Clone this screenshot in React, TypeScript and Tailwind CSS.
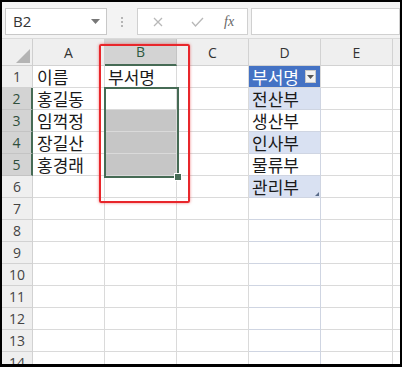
import React from 'react';

const grid = 'grid grid-cols-[31px_72px_72px_72px_72px_72px_7px]';
const cols = ['A', 'B', 'C', 'D', 'E'];

interface RowData {
  a?: string;
  b?: string;
  d?: string;
}

const rows: RowData[] = [
  { a: '이름', b: '부서명', d: '부서명' },
  { a: '홍길동', d: '전산부' },
  { a: '임꺽정', d: '생산부' },
  { a: '장길산', d: '인사부' },
  { a: '홍경래', d: '물류부' },
  { d: '관리부' },
  {}, {}, {}, {}, {}, {}, {}, {},
];

const korean = "font-['Noto_Sans_CJK_KR','Noto_Sans',sans-serif] text-[17px] text-[#1a1a1a] leading-none";

const Toolbar: React.FC = () => (
  <div className="h-[37px] bg-[#f3f3f3] flex items-start pt-[6px] border-b border-[#dadada]">
    <div className="ml-[3px] w-[102px] h-[27px] bg-white border border-[#c8c8c8] flex items-center justify-between pl-[7px] pr-[6px]">
      <span className="text-[15px] text-[#333] font-['Open_Sans',sans-serif]">B2</span>
      <svg width="9" height="5" viewBox="0 0 9 5">
        <path d="M0 0h9L4.5 5z" fill="#777" />
      </svg>
    </div>
    <div className="w-[30px] h-[27px] flex flex-col items-center justify-center gap-[2px]">
      <span className="w-[2px] h-[2px] bg-[#b5b5b5]" />
      <span className="w-[2px] h-[2px] bg-[#b5b5b5]" />
      <span className="w-[2px] h-[2px] bg-[#b5b5b5]" />
    </div>
    <div className="w-[111px] h-[27px] bg-white border border-[#d0d0d0] flex items-center">
      <svg className="ml-[15px]" width="10" height="10" viewBox="0 0 10 10">
        <path d="M1 1l8 8M9 1l-8 8" stroke="#b8b8b8" strokeWidth="1.3" />
      </svg>
      <svg className="ml-[28px]" width="13" height="10" viewBox="0 0 13 10">
        <path d="M1 5l3.5 4L12 1" stroke="#b8b8b8" strokeWidth="1.3" fill="none" />
      </svg>
      <span className="ml-[20px] font-['Liberation_Serif',serif] italic text-[14px] text-[#666]">fx</span>
    </div>
    <div className="ml-[3px] flex-1 h-[27px] bg-white border border-[#d0d0d0]" />
  </div>
);

const App: React.FC = () => {
  return (
    <div className="w-[402px] h-[367px] overflow-hidden border-2 border-b-[3px] border-black bg-white relative font-['Open_Sans',sans-serif]">
      <Toolbar />
      <div className="relative">
        {/* column headers */}
        <div className={`${grid} h-[27px] bg-[#efefef]`}>
          <div className="relative border-r border-b border-[#cfcfcf]">
            <svg className="absolute right-[2px] bottom-[2px]" width="14" height="14" viewBox="0 0 14 14">
              <path d="M14 0V14H0z" fill="#b4b4b4" />
            </svg>
          </div>
          {cols.map((c) =>
            c === 'B' ? (
              <div key={c} className="bg-[#d3d3d3] border-r border-[#c4c4c4] border-b-2 border-b-[#466b55] flex items-center justify-center text-[14px] text-[#2f5a41]">
                {c}
              </div>
            ) : (
              <div key={c} className="border-r border-b border-[#d2d2d2] flex items-center justify-center text-[14px] text-[#333]">
                {c}
              </div>
            )
          )}
          <div className="border-b border-[#d2d2d2]" />
        </div>

        {rows.map((r, i) => {
          const n = i + 1;
          const sel = n >= 2 && n <= 5;
          const band = n >= 2 && n <= 6 && n % 2 === 0;
          return (
            <div key={n} className={`${grid} h-[22px]`}>
              <div
                className={
                  sel
                    ? 'bg-[#d3d3d3] border-b border-[#c4c4c4] border-r-2 border-r-[#466b55] flex items-center justify-center text-[14px] text-[#2f4f3c]'
                    : 'bg-[#efefef] border-b border-r border-[#d2d2d2] flex items-center justify-center text-[14px] text-[#444]'
                }
              >
                {n}
              </div>
              <div className={`border-r border-b border-[#dadada] flex items-center pl-[4px] ${korean}`}>{r.a}</div>
              <div
                className={`border-r border-b border-[#dadada] flex items-center pl-[3px] ${korean} ${
                  n >= 3 && n <= 5 ? 'bg-[#c6c6c6]' : ''
                }`}
              >
                {r.b}
              </div>
              <div className="border-r border-b border-[#dadada]" />
              {n === 1 ? (
                <div className="relative bg-[#4472c4] border-r border-b border-[#dadada] flex items-center pl-[3px] font-['Noto_Sans_CJK_KR','Noto_Sans',sans-serif] text-[17px] text-white leading-none">
                  {r.d}
                  <div className="absolute right-[4px] top-[4px] w-[11px] h-[13px] bg-[#f2f2f2] border border-[#c8c8c8] flex items-center justify-center">
                    <svg width="7" height="4" viewBox="0 0 7 4">
                      <path d="M0 0h7L3.5 4z" fill="#555" />
                    </svg>
                  </div>
                </div>
              ) : (
                <div
                  className={`relative border-r border-b border-[#cfd5e2] flex items-center pl-[3px] ${korean} ${
                    band ? 'bg-[#d9e1f2]' : ''
                  }`}
                >
                  {r.d}
                  {n === 6 && (
                    <svg className="absolute right-[1px] bottom-[1px]" width="4" height="4" viewBox="0 0 4 4">
                      <path d="M4 0V4H0z" fill="#5a6c8a" />
                    </svg>
                  )}
                </div>
              )}
              <div className="border-r border-b border-[#dadada]" />
              <div className="border-b border-[#dadada]" />
            </div>
          );
        })}

        {/* selection B2:B5 */}
        <div className="absolute left-[102px] top-[48px] w-[75px] h-[91px] border-2 border-[#466b55]">
          <div className="absolute -right-[4px] -bottom-[4px] w-[6px] h-[6px] bg-[#466b55] outline outline-1 outline-white" />
        </div>
      </div>

      {/* red highlight box */}
      <div className="absolute left-[97px] top-[42px] w-[91px] h-[159px] border-2 border-[#e8262b] rounded-[2px] shadow-[0_0_3px_rgba(232,38,43,0.6)]" />
    </div>
  );
};

export default App;
